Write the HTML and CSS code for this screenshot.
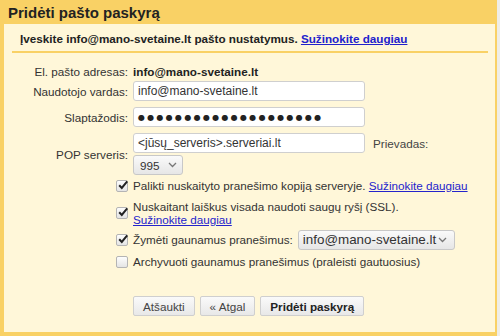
FILE: index.html
```html
<!DOCTYPE html>
<html lang="lt">
<head>
    <meta charset="UTF-8">
    <meta name="viewport" content="width=device-width, initial-scale=1.0">
    <title>Pridėti pašto paskyrą</title>
    <link rel="stylesheet" href="styles.css">
</head>
<body>
    <div class="dialog">
        <h1 class="dialog-title">Pridėti pašto paskyrą</h1>
        <div class="panel">
            <p class="intro">Įveskite info@mano-svetaine.lt pašto nustatymus. <a href="#">Sužinokite daugiau</a></p>
            <div class="form">
                <div class="row row-email">
                    <span class="label">El. pašto adresas:</span>
                    <span class="value">info@mano-svetaine.lt</span>
                </div>
                <div class="row">
                    <span class="label">Naudotojo vardas:</span>
                    <input class="field" type="text" value="info@mano-svetaine.lt">
                </div>
                <div class="row">
                    <span class="label">Slaptažodis:</span>
                    <div class="field dots">●●●●●●●●●●●●●●●●●●●●</div>
                </div>
                <div class="row row-pop">
                    <span class="label">POP serveris:</span>
                    <div class="pop-fields">
                        <div class="pop-line">
                            <input class="field" type="text" value="<jūsų_serveris>.serveriai.lt">
                            <span class="port-label">Prievadas:</span>
                        </div>
                        <div class="select select-port">
                            <span>995</span>
                            <svg width="9" height="6" viewBox="0 0 9 6"><path d="M1 1l3.5 3.5L8 1" fill="none" stroke="#777" stroke-width="1.3"/></svg>
                        </div>
                    </div>
                </div>

                <div class="check-row check-first">
                    <span class="box"><svg width="12" height="12" viewBox="0 0 12 12"><path d="M2.2 6.2l2.6 2.8L10.2 2.4" fill="none" stroke="#222" stroke-width="2"/></svg></span>
                    <span class="check-text">Palikti nuskaityto pranešimo kopiją serveryje. <a href="#">Sužinokite daugiau</a></span>
                </div>
                <div class="check-row check-two">
                    <span class="box"><svg width="12" height="12" viewBox="0 0 12 12"><path d="M2.2 6.2l2.6 2.8L10.2 2.4" fill="none" stroke="#222" stroke-width="2"/></svg></span>
                    <span class="check-text">Nuskaitant laiškus visada naudoti saugų ryšį (SSL).<br><a href="#">Sužinokite daugiau</a></span>
                </div>
                <div class="check-row check-select">
                    <span class="box"><svg width="12" height="12" viewBox="0 0 12 12"><path d="M2.2 6.2l2.6 2.8L10.2 2.4" fill="none" stroke="#222" stroke-width="2"/></svg></span>
                    <span class="check-text">Žymėti gaunamus pranešimus:</span>
                    <div class="select select-label">
                        <span>info@mano-svetaine.lt</span>
                        <svg width="9" height="6" viewBox="0 0 9 6"><path d="M1 1l3.5 3.5L8 1" fill="none" stroke="#777" stroke-width="1.3"/></svg>
                    </div>
                </div>
                <div class="check-row check-last">
                    <span class="box"></span>
                    <span class="check-text">Archyvuoti gaunamus pranešimus (praleisti gautuosius)</span>
                </div>

                <div class="buttons">
                    <button class="btn">Atšaukti</button>
                    <button class="btn">« Atgal</button>
                    <button class="btn btn-main">Pridėti paskyrą</button>
                </div>
            </div>
        </div>
    </div>
</body>
</html>
```

FILE: styles.css
```css
body {
    margin: 0;
    background-color: #eeede8;
    font-family: "Liberation Sans", Arial, sans-serif;
    font-size: 11.7px;
    color: #333;
}
.dialog {
    width: 497px;
    height: 336px;
    box-sizing: border-box;
    background-color: #f9d165;
    padding: 0 2px 4px 4px;
    display: flex;
    flex-direction: column;
}
.dialog-title {
    margin: 0;
    height: 24px;
    line-height: 26px;
    padding-left: 4px;
    font-size: 15px;
    color: #222;
}
.panel {
    flex: 1;
    background-color: #fff7d9;
    padding: 8px 0 0 0;
}
.intro {
    margin: 0 7px 0 8px;
    padding: 0 0 5px 8px;
    line-height: 14px;
    font-size: 11.7px;
    font-weight: bold;
    color: #222;
    border-bottom: 2px solid #f9d165;
}
a {
    color: #2424cc;
}
.intro a {
    color: #2222cc;
}
.form {
    display: flex;
    flex-direction: column;
}
.row {
    display: flex;
    align-items: center;
    margin-bottom: 6px;
}
.row-email {
    margin-top: 10px;
    margin-bottom: 2px;
    height: 16px;
}
.label {
    width: 124px;
    margin-right: 5px;
    text-align: right;
}
.value {
    font-weight: bold;
    color: #222;
}
.field {
    width: 232px;
    height: 20px;
    box-sizing: border-box;
    border: 1px solid #cfcfcf;
    border-radius: 3px;
    padding: 0 4px;
    background: #fff;
    font-family: inherit;
    font-size: 12px;
    color: #333;
    outline: none;
}
.dots {
    display: flex;
    align-items: center;
    font-family: "DejaVu Sans", sans-serif;
    font-size: 8px;
    letter-spacing: 2.3px;
    color: #222;
    overflow: hidden;
}
.row-pop {
    margin-bottom: 0;
}
.pop-fields {
    display: flex;
    flex-direction: column;
    gap: 2px;
}
.pop-line {
    display: flex;
    align-items: center;
}
.port-label {
    margin-left: 8px;
    color: #444;
}
.select {
    height: 20px;
    box-sizing: border-box;
    border: 1px solid #c8c8c8;
    border-radius: 3px;
    background: linear-gradient(#fafafa, #e6e6e6);
    display: flex;
    align-items: center;
    justify-content: space-between;
    padding: 0 5px 0 6px;
    color: #333;
}
.select-port {
    width: 50px;
}
.select-label {
    width: 157px;
    margin-left: 5px;
    padding: 0 7px 0 4px;
    font-size: 13.4px;
}
.check-row {
    display: flex;
    align-items: center;
    margin-left: 112px;
    line-height: 14px;
}
.check-first {
    margin-top: 4px;
}
.check-two {
    margin-top: 7px;
    line-height: 13px;
}
.check-select {
    margin-top: 4px;
    height: 20px;
}
.check-last {
    margin-top: 5px;
}
.box {
    width: 12px;
    height: 12px;
    box-sizing: border-box;
    border: 1px solid #b4b4b4;
    border-radius: 2px;
    background: linear-gradient(#fdfdfd, #e4e4e4);
    margin-right: 5px;
    position: relative;
    flex-shrink: 0;
}
.box svg {
    position: absolute;
    left: 0;
    top: -2px;
}
.buttons {
    margin-top: 27px;
    margin-left: 129px;
    display: flex;
    gap: 5px;
}
.btn {
    height: 20px;
    padding: 0 9px;
    border: 1px solid #cfcfcf;
    border-radius: 2px;
    background: linear-gradient(#fafafa, #e8e8e8);
    font-family: inherit;
    font-size: 11.7px;
    color: #444;
}
.btn-main {
    font-weight: bold;
    color: #222;
}
```
